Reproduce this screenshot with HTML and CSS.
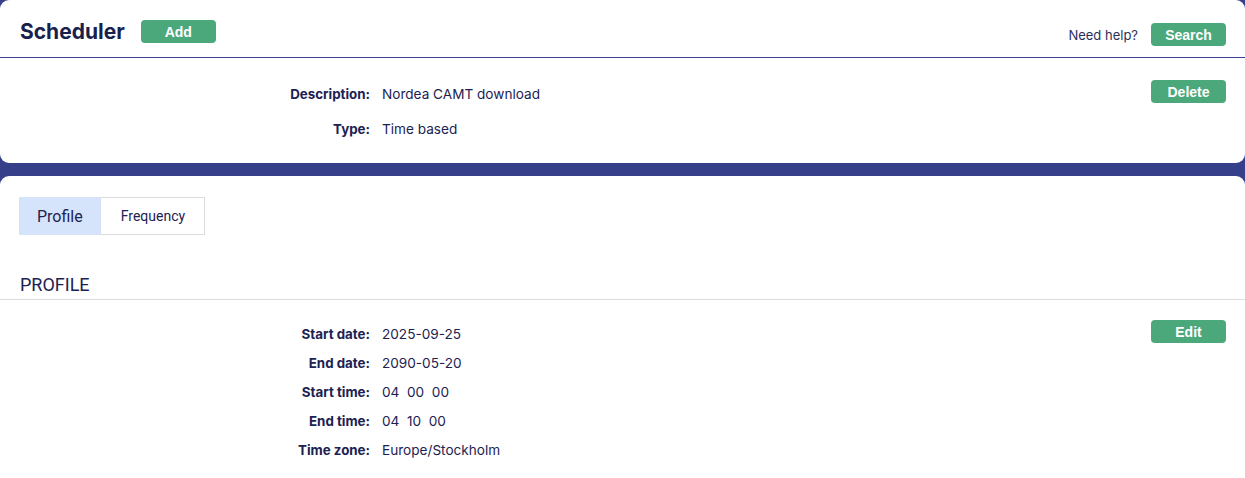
FILE: index.html
```html
<!DOCTYPE html>
<html lang="en">
<head>
    <meta charset="UTF-8">
    <meta name="viewport" content="width=device-width, initial-scale=1.0">
    <title>Scheduler</title>
    <link rel="stylesheet" href="styles.css">
</head>
<body>
    <div class="card card-top">
        <header class="page-header">
            <div class="header-left">
                <h1>Scheduler</h1>
                <button class="btn">Add</button>
            </div>
            <div class="header-right">
                <span class="help">Need help?</span>
                <button class="btn">Search</button>
            </div>
        </header>

        <section class="details">
            <dl class="fields fields-wide">
                <dt>Description:</dt>
                <dd>Nordea CAMT download</dd>
                <dt>Type:</dt>
                <dd>Time based</dd>
            </dl>
            <button class="btn">Delete</button>
        </section>
    </div>

    <div class="card card-bottom">
        <div class="tabs">
            <button class="tab active">Profile</button>
            <button class="tab">Frequency</button>
        </div>

        <h2 class="section-title">PROFILE</h2>

        <section class="details details-profile">
            <dl class="fields">
                <dt>Start date:</dt>
                <dd>2025-09-25</dd>
                <dt>End date:</dt>
                <dd>2090-05-20</dd>
                <dt>Start time:</dt>
                <dd>04&nbsp;&nbsp;00&nbsp;&nbsp;00</dd>
                <dt>End time:</dt>
                <dd>04&nbsp;&nbsp;10&nbsp;&nbsp;00</dd>
                <dt>Time zone:</dt>
                <dd>Europe/Stockholm</dd>
            </dl>
            <button class="btn">Edit</button>
        </section>
    </div>
</body>
</html>
```

FILE: styles.css
```css
/* Reset some basic styles */
* {
    margin: 0;
    padding: 0;
    box-sizing: border-box;
}

body {
    font-family: Inter, "Noto Sans", sans-serif;
    background-color: #363f8a;
    color: #1c2252;
    height: 100vh;
    overflow: hidden;
}

.card {
    background-color: #fff;
    border-radius: 9px;
}

.card-top {
    height: 163px;
    margin-bottom: 13px;
}

.card-bottom {
    height: 320px;
    padding-top: 21px;
}

/* Header */
.page-header {
    display: flex;
    justify-content: space-between;
    height: 58px;
    padding: 0 19px 0 20px;
    border-bottom: 1px solid #3a418e;
}

.header-left {
    display: flex;
    align-items: center;
    gap: 16px;
    padding-top: 20px;
    align-self: flex-start;
}

h1 {
    font-size: 21px;
    font-weight: 700;
    line-height: 23px;
    color: #1a1f4d;
}

.header-right {
    display: flex;
    align-items: center;
    gap: 13px;
    padding-top: 23px;
    align-self: flex-start;
}

.help {
    font-size: 13px;
    color: #2a2f5a;
}

/* Buttons */
.btn {
    background-color: #4ba87b;
    color: #fff;
    border: none;
    border-radius: 4px;
    width: 75px;
    height: 23px;
    font-family: "Liberation Sans", Arial, sans-serif;
    font-weight: 700;
    font-size: 14px;
    cursor: pointer;
}

/* Label / value rows */
.details {
    display: flex;
    align-items: flex-start;
    padding: 22px 19px 0 0;
}

.details .btn {
    margin-left: auto;
}

.fields {
    display: grid;
    grid-template-columns: 370px auto;
    column-gap: 12px;
    row-gap: 12px;
    font-size: 13.33px;
    line-height: 17px;
    margin-top: 5px;
}

.fields dd {
    font-size: 13.6px;
}

.fields-wide {
    row-gap: 18px;
    margin-top: 6px;
}

.fields dt {
    text-align: right;
    font-weight: 700;
}

/* Tabs */
.tabs {
    display: flex;
    margin-left: 19px;
}

.tab {
    height: 38px;
    background-color: #fff;
    border: 1px solid #dcdcdc;
    color: #1c2252;
    font-family: Roboto, sans-serif;
    font-size: 14px;
    padding: 0 19px 0 20px;
}

.tab.active {
    background-color: #d5e4fb;
    border-color: #d5e4fb;
    font-size: 16px;
    padding: 0 17px;
}

.tab + .tab {
    border-left: none;
}

.section-title {
    font-family: Roboto, sans-serif;
    font-weight: 400;
    font-size: 18px;
    color: #1c2252;
    padding: 39px 20px 4px;
    border-bottom: 1px solid #dcdcdc;
}

.details-profile {
    padding-top: 20px;
}

.details-profile .fields {
    margin-top: 6px;
}
```
